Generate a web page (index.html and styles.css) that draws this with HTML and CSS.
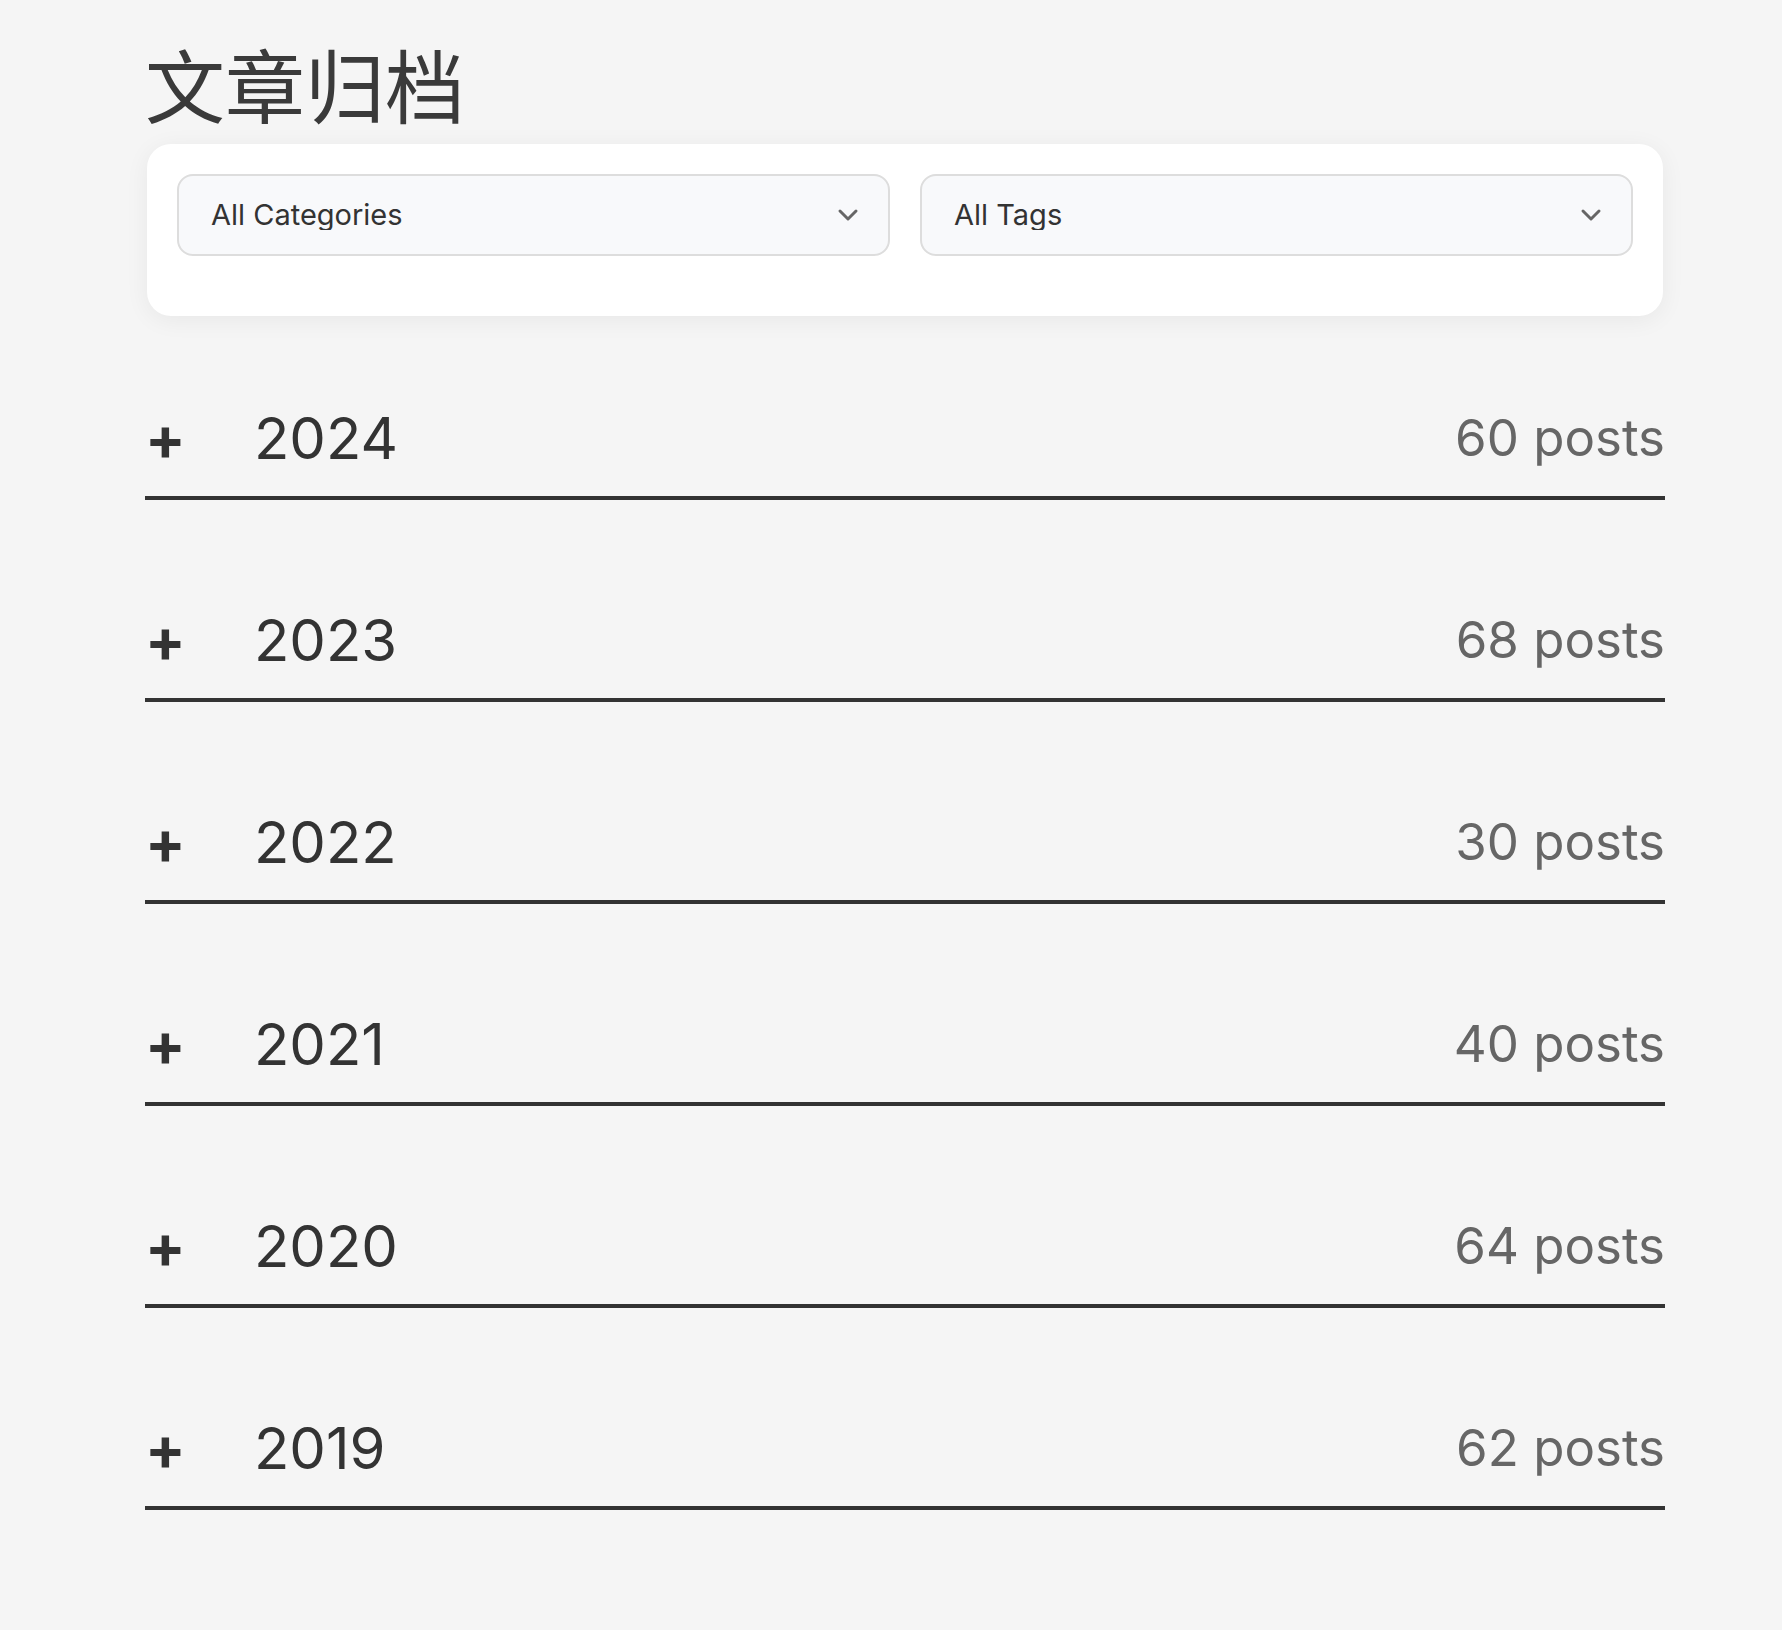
FILE: index.html
```html
<!DOCTYPE html>
<html lang="zh-CN">
<head>
<meta charset="utf-8">
<meta name="viewport" content="width=device-width, initial-scale=1">
<title>文章归档</title>
<link rel="stylesheet" href="styles.css">
</head>
<body>
<main class="archive">
  <h1 class="archive-title">文章归档</h1>
  <form class="filters">
    <div class="filter">
      <select class="filter-select" aria-label="Categories"><option>All Categories</option></select>
      <svg class="filter-arrow" viewBox="0 0 24 24" aria-hidden="true"><path d="M4 8l8 8 8-8"/></svg>
    </div>
    <div class="filter">
      <select class="filter-select" aria-label="Tags"><option>All Tags</option></select>
      <svg class="filter-arrow" viewBox="0 0 24 24" aria-hidden="true"><path d="M4 8l8 8 8-8"/></svg>
    </div>
  </form>
  <div class="years">
    <button class="year" type="button" aria-expanded="false"><span class="year-icon">+</span><span class="year-label">2024</span><span class="year-count">60 posts</span></button>
    <button class="year" type="button" aria-expanded="false"><span class="year-icon">+</span><span class="year-label">2023</span><span class="year-count">68 posts</span></button>
    <button class="year" type="button" aria-expanded="false"><span class="year-icon">+</span><span class="year-label">2022</span><span class="year-count">30 posts</span></button>
    <button class="year" type="button" aria-expanded="false"><span class="year-icon">+</span><span class="year-label">2021</span><span class="year-count">40 posts</span></button>
    <button class="year" type="button" aria-expanded="false"><span class="year-icon">+</span><span class="year-label">2020</span><span class="year-count">64 posts</span></button>
    <button class="year" type="button" aria-expanded="false"><span class="year-icon">+</span><span class="year-label">2019</span><span class="year-count">62 posts</span></button>
  </div>
</main>
</body>
</html>
```
FILE: styles.css
```css
* {
  box-sizing: border-box;
}

body {
  margin: 0;
  background: #f5f5f5;
  color: #333;
  font-family: Inter, "Noto Sans CJK SC", sans-serif;
}

.archive {
  padding: 32px 117px 118px 145px;
}

.archive-title {
  margin: 0 0 12px;
  color: #3a3a3a;
  font-family: "Noto Sans CJK SC", sans-serif;
  font-size: 80px;
  font-weight: 400;
  line-height: 100px;
}

.filters {
  display: grid;
  grid-template-columns: 1fr 1fr;
  gap: 30px;
  margin: 0 2px 78px;
  padding: 30px 30px 60px;
  border-radius: 24px;
  background: #fff;
  box-shadow: 0 4px 24px rgba(0, 0, 0, 0.06);
}

.filter {
  display: grid;
  align-items: center;
}

.filter-select,
.filter-arrow {
  grid-area: 1 / 1;
}

.filter-select {
  appearance: none;
  width: 100%;
  height: 82px;
  padding: 24px 80px 24px 32px;
  border: 2px solid #ddd;
  border-radius: 16px;
  background: #f8f9fb;
  color: #333;
  font: 29px/30px Inter, sans-serif;
}

.filter-arrow {
  justify-self: end;
  width: 24px;
  height: 24px;
  margin-right: 30px;
  fill: none;
  stroke: #666;
  stroke-width: 3;
  stroke-linecap: round;
  stroke-linejoin: round;
  pointer-events: none;
}

.years {
  display: grid;
  gap: 96px;
}

.year {
  display: flex;
  align-items: center;
  width: 100%;
  height: 106px;
  padding: 0 0 14px;
  border: 0;
  border-bottom: 4px solid #333;
  background: none;
  color: #333;
  font-family: inherit;
  line-height: 80px;
  text-align: left;
  cursor: pointer;
}

.year-icon {
  width: 109px;
  font-size: 60px;
  font-weight: 700;
}

.year-label {
  flex: 1;
  font-size: 58px;
}

.year-count {
  color: #666;
  font-size: 51px;
}
```
